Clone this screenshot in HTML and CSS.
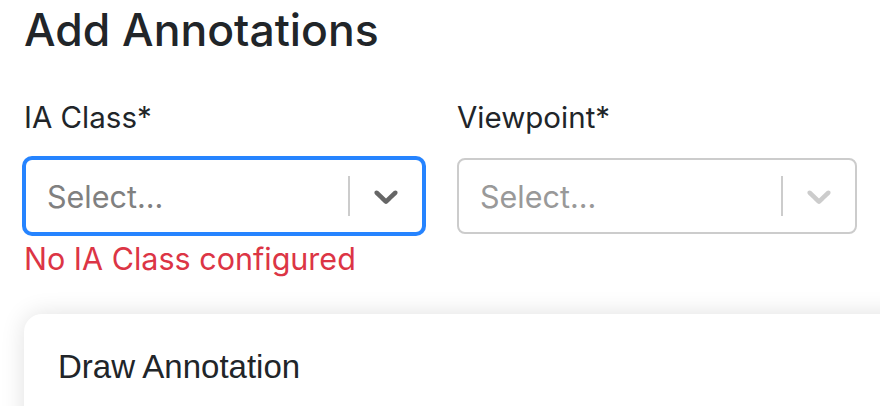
FILE: index.html
```html
<!DOCTYPE html>
<html lang="en">
  <head>
    <meta charset="UTF-8" />
    <meta name="viewport" content="width=device-width, initial-scale=1.0" />
    <title>Add Annotations</title>
    <link rel="stylesheet" href="styles.css">
  </head>
  <body>
  <div class="page">
    <h1 class="title">Add Annotations</h1>
    <div class="fields">
      <div class="field">
        <label class="field-label">IA Class*</label>
        <div class="select select-focused">
          <span class="select-value">Select...</span>
          <span class="select-sep"></span>
          <span class="select-arrow">
            <svg viewBox="0 0 20 20" width="40" height="40"><path d="M4.516 7.548c0.436-0.446 1.043-0.481 1.576 0l3.908 3.747 3.908-3.747c0.533-0.481 1.141-0.446 1.574 0 0.436 0.445 0.408 1.197 0 1.615-0.406 0.418-4.695 4.502-4.695 4.502-0.217 0.223-0.502 0.335-0.787 0.335s-0.57-0.112-0.789-0.335c0 0-4.287-4.084-4.695-4.502s-0.436-1.17 0-1.615z"/></svg>
          </span>
        </div>
        <div class="field-error">No IA Class configured</div>
      </div>
      <div class="field">
        <label class="field-label">Viewpoint*</label>
        <div class="select select-disabled">
          <span class="select-value">Select...</span>
          <span class="select-sep"></span>
          <span class="select-arrow">
            <svg viewBox="0 0 20 20" width="40" height="40"><path d="M4.516 7.548c0.436-0.446 1.043-0.481 1.576 0l3.908 3.747 3.908-3.747c0.533-0.481 1.141-0.446 1.574 0 0.436 0.445 0.408 1.197 0 1.615-0.406 0.418-4.695 4.502-4.695 4.502-0.217 0.223-0.502 0.335-0.787 0.335s-0.57-0.112-0.789-0.335c0 0-4.287-4.084-4.695-4.502s-0.436-1.17 0-1.615z"/></svg>
          </span>
        </div>
      </div>
    </div>
    <div class="card">
      <h2 class="card-title">Draw Annotation</h2>
    </div>
  </div>
  </body>
</html>
```

FILE: styles.css
```css
body {
  margin: 0;
  overflow: hidden;
  font-family: Inter, "Liberation Sans", sans-serif;
  color: #212529;
  background: #fff;
}
.page {
  padding-left: 24px;
}
.title {
  margin: 4px 0 0 0;
  font-size: 44.5px;
  font-weight: 500;
  line-height: 1.2;
}
.fields {
  display: flex;
  align-items: flex-start;
  gap: 33px;
  margin-top: 38px;
}
.field {
  width: 400px;
}
.field-field {
  width: 398px;
}
.field-label {
  display: block;
  font-size: 29.5px;
  line-height: 1.5;
  margin-bottom: 18px;
}
.select {
  display: flex;
  align-items: center;
  height: 76px;
  box-sizing: border-box;
  border: 2px solid #ccc;
  border-radius: 8px;
  background: #fff;
}
.select-focused {
  border-color: #2684ff;
  box-shadow: 0 0 0 2px #2684ff;
}
.select-value {
  flex: 1;
  padding-left: 21px;
  padding-top: 2px;
  font-size: 30.5px;
  color: #808080;
}
.select-disabled .select-value {
  color: #999;
}
.select-sep {
  align-self: stretch;
  width: 2px;
  margin: 16px 0;
  background: #ccc;
}
.select-arrow {
  display: flex;
  padding: 0 16px;
  fill: #666;
}
.select-disabled .select-arrow {
  fill: #ccc;
}
.field-error {
  margin-top: 2px;
  font-size: 30.5px;
  line-height: 1.5;
  color: #dc3545;
}
.card {
  margin-top: 33px;
  width: 900px;
  height: 200px;
  padding: 33px 34px;
  border-radius: 18px;
  background: #fff;
  box-shadow: 0 0 24px rgba(0, 0, 0, 0.12);
}
.card-title {
  margin: 0;
  font-family: "Liberation Sans", Arial, sans-serif;
  font-size: 33px;
  font-weight: 400;
  line-height: 1.2;
}
```
